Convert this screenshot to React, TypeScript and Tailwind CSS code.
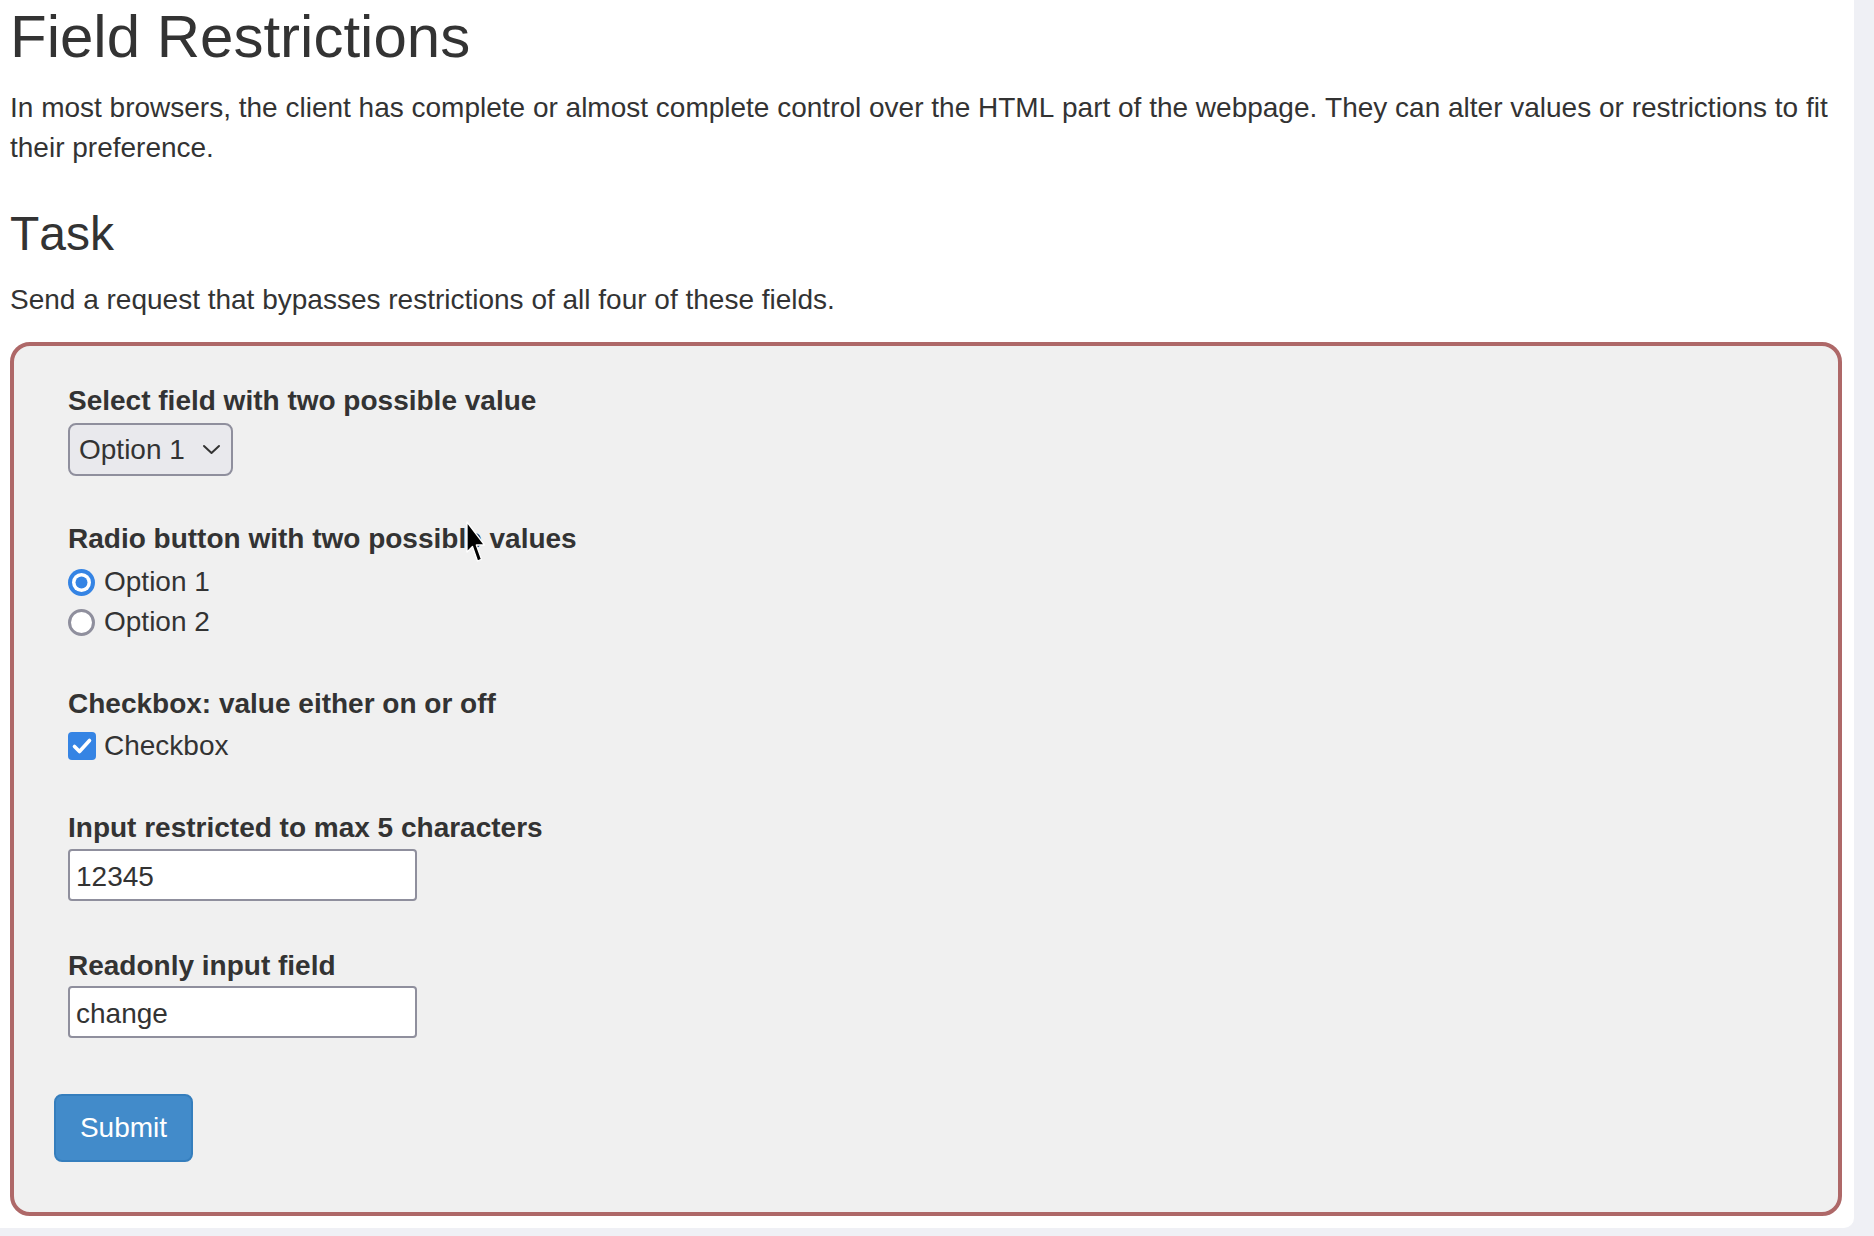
import React from "react";

function RadioChecked() {
  return (
    <svg width="27" height="27" viewBox="0 0 27 27" className="shrink-0">
      <circle cx="13.5" cy="13.5" r="13.5" fill="#3584e4" />
      <circle cx="13.5" cy="13.5" r="9.5" fill="#ffffff" />
      <circle cx="13.5" cy="13.5" r="6" fill="#3584e4" />
    </svg>
  );
}

function RadioUnchecked() {
  return (
    <svg width="27" height="27" viewBox="0 0 27 27" className="shrink-0">
      <circle cx="13.5" cy="13.5" r="12" fill="#ffffff" stroke="#8f8f9d" strokeWidth="3" />
    </svg>
  );
}

function CheckboxChecked() {
  return (
    <svg width="28" height="28" viewBox="0 0 28 28" className="shrink-0">
      <rect x="0" y="0" width="28" height="28" rx="4" fill="#3584e4" />
      <path d="M6.5 14.5 L11.5 19.5 L21.5 8.5" fill="none" stroke="#ffffff" strokeWidth="3.6" strokeLinecap="round" strokeLinejoin="round" />
    </svg>
  );
}

function Cursor() {
  return (
    <svg width="22" height="44" viewBox="0 0 22 44">
      <path
        d="M1 1 L1 31 L6.5 25.5 L11.5 40 L15.5 38.3 L10.3 24 L18.5 24 Z"
        fill="#000000"
        stroke="#ffffff"
        strokeWidth="1.3"
        strokeLinejoin="round"
      />
    </svg>
  );
}

function Label({ children }: { children: React.ReactNode }) {
  return <div className="text-[28px] leading-[40px] font-bold text-[#333333]">{children}</div>;
}

export default function App() {
  return (
    <div className="relative min-h-screen w-full bg-[#eff0f5] font-['Liberation_Sans',Arial,sans-serif] text-[#333333] [font-kerning:none]">
      <div className="w-[1854px] h-[1228px] bg-white rounded-br-[10px] pl-[10px] pr-[12px] pt-[4px]">
        <h1 className="m-0 text-[60px] leading-[66px] font-normal">Field Restrictions</h1>
        <p className="mt-[18px] text-[28px] leading-[40px]">
          In most browsers, the client has complete or almost complete control over the HTML part of the webpage. They can alter values or restrictions to fit their preference.
        </p>
        <h2 className="mt-[39px] text-[48px] leading-[53px] font-normal">Task</h2>
        <p className="mt-[20px] text-[28px] leading-[40px]">Send a request that bypasses restrictions of all four of these fields.</p>

        <div className="mt-[22px] border-[4px] border-[#ae6868] rounded-[20px] bg-[#f0f0f0] pt-[35px] pb-[50px] pl-[40px]">
          <div className="ml-[14px]">
            <div>
              <Label>Select field with two possible value</Label>
              <div className="mt-[2px] flex h-[53px] w-[165px] items-center rounded-[8px] border-2 border-[#8f8f9d] bg-[#e9e9ed] pl-[9px] pr-[10px] text-[28px] leading-[40px]">
                <span>Option 1</span>
                <svg width="19" height="11" viewBox="0 0 19 11" className="ml-auto">
                  <path d="M2 2 L9.5 9 L17 2" fill="none" stroke="#333333" strokeWidth="2" strokeLinecap="round" strokeLinejoin="round" />
                </svg>
              </div>
            </div>

            <div className="mt-[43px]">
              <Label>Radio button with two possible values</Label>
              <div className="mt-[3px]">
                <div className="flex h-[40px] items-center text-[28px] leading-[40px]">
                  <RadioChecked />
                  <span className="ml-[9px]">Option 1</span>
                </div>
                <div className="flex h-[40px] items-center text-[28px] leading-[40px]">
                  <RadioUnchecked />
                  <span className="ml-[9px]">Option 2</span>
                </div>
              </div>
            </div>

            <div className="mt-[42px]">
              <Label>Checkbox: value either on or off</Label>
              <div className="mt-[2px] flex h-[40px] items-center text-[28px] leading-[40px]">
                <CheckboxChecked />
                <span className="ml-[8px]">Checkbox</span>
              </div>
            </div>

            <div className="mt-[42px]">
              <Label>Input restricted to max 5 characters</Label>
              <input
                readOnly
                value="12345"
                className="mt-[1px] block h-[52px] w-[349px] rounded-[4px] border-2 border-[#8f8f9d] bg-white px-[6px] pt-[3px] text-[28px] text-[#333333] outline-none font-['Liberation_Sans',Arial,sans-serif]"
              />
            </div>

            <div className="mt-[45px]">
              <Label>Readonly input field</Label>
              <input
                readOnly
                value="change"
                className="block h-[52px] w-[349px] rounded-[4px] border-2 border-[#8f8f9d] bg-white px-[6px] pt-[3px] text-[28px] text-[#333333] outline-none font-['Liberation_Sans',Arial,sans-serif]"
              />
            </div>
          </div>

          <button className="mt-[56px] flex h-[68px] w-[139px] items-center justify-center rounded-[8px] border-2 border-[#357ebd] bg-[#428bca] text-[28px] leading-[40px] text-white font-['Liberation_Sans',Arial,sans-serif]">
            Submit
          </button>
        </div>
      </div>

      <div className="absolute left-[466px] top-[521px]">
        <Cursor />
      </div>
    </div>
  );
}
